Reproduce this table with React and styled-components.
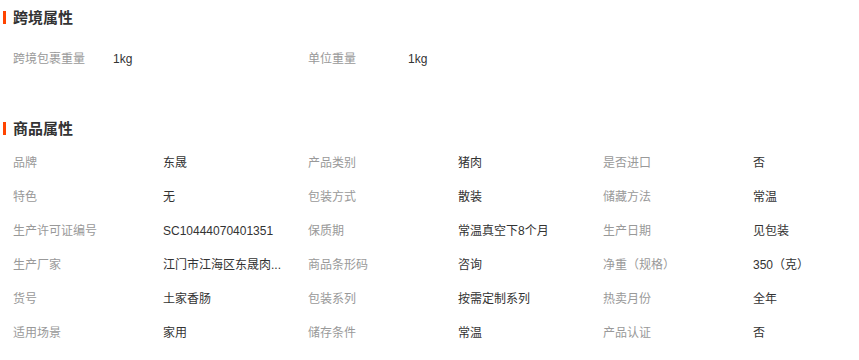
import React from 'react';
import styled, { createGlobalStyle } from 'styled-components';

const GlobalStyle = createGlobalStyle`
  html, body {
    margin: 0;
    padding: 0;
    background: #fff;
  }
  body {
    font-family: "Liberation Sans", "Noto Sans CJK SC", sans-serif;
    font-size: 12px;
    color: #333;
  }
`;

const Page = styled.div`
  width: 859px;
  padding-left: 3px;
  box-sizing: border-box;
`;

const Section = styled.section`
  margin-top: ${props => props.top}px;
`;

const Title = styled.h3`
  margin: 0;
  height: 13px;
  line-height: 13px;
  padding-left: 7px;
  border-left: 3px solid #ff4400;
  font-size: 15px;
  font-weight: bold;
  color: #333;
`;

const Grid = styled.div`
  display: grid;
  grid-template-columns: repeat(${props => props.cols}, ${props => props.labelWidth}px ${props => 295 - props.labelWidth}px);
  grid-auto-rows: 34px;
  margin-top: ${props => props.gap}px;
  padding-left: 10px;
`;

const Label = styled.div`
  line-height: 34px;
  color: #999;
  white-space: nowrap;
`;

const Value = styled.div`
  line-height: 34px;
  color: #333;
  white-space: nowrap;
`;

const crossBorder = [
  ['跨境包裹重量', '1kg'],
  ['单位重量', '1kg'],
];

const goods = [
  ['品牌', '东晟'],
  ['产品类别', '猪肉'],
  ['是否进口', '否'],
  ['特色', '无'],
  ['包装方式', '散装'],
  ['储藏方法', '常温'],
  ['生产许可证编号', 'SC10444070401351'],
  ['保质期', '常温真空下8个月'],
  ['生产日期', '见包装'],
  ['生产厂家', '江门市江海区东晟肉类制品有限公司'],
  ['商品条形码', '咨询'],
  ['净重（规格）', '350（克）'],
  ['货号', '土家香肠'],
  ['包装系列', '按需定制系列'],
  ['热卖月份', '全年'],
  ['适用场景', '家用'],
  ['储存条件', '常温'],
  ['产品认证', '否'],
];

// long CJK values get cut to 9 chars, like the shop page does
const shorten = text => (/[\u4e00-\u9fa5]/.test(text) && text.length > 10 ? text.slice(0, 9) + '...' : text);

function renderPairs(items) {
  return items.map(([label, value]) => (
    <React.Fragment key={label}>
      <Label>{label}</Label>
      <Value title={value}>{shorten(value)}</Value>
    </React.Fragment>
  ));
}

export default function App() {
  return (
    <Page>
      <GlobalStyle />
      <Section top={11}>
        <Title>跨境属性</Title>
        <Grid cols={2} labelWidth={100} gap={18}>
          {renderPairs(crossBorder)}
        </Grid>
      </Section>
      <Section top={46}>
        <Title>商品属性</Title>
        <Grid cols={3} labelWidth={150} gap={11}>
          {renderPairs(goods)}
        </Grid>
      </Section>
    </Page>
  );
}
